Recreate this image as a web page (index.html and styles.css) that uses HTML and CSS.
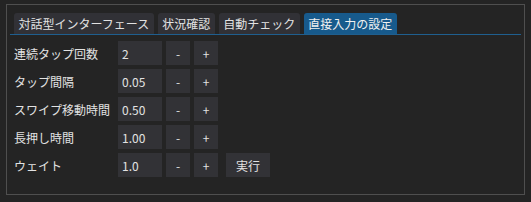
FILE: index.html
```html
<!DOCTYPE html>
<html lang="ja">
<head>
  <meta charset="UTF-8" />
  <title>直接入力の設定</title>
  <link rel="stylesheet" href="styles.css">
</head>
<body>
  <div class="panel">
    <div class="tabs">
      <div class="tab">対話型インターフェース</div>
      <div class="tab">状況確認</div>
      <div class="tab">自動チェック</div>
      <div class="tab active">直接入力の設定</div>
    </div>

    <div class="form">
      <div class="row">
        <span class="label">連続タップ回数</span>
        <input class="field" value="2">
        <button class="btn">-</button>
        <button class="btn">+</button>
      </div>
      <div class="row">
        <span class="label">タップ間隔</span>
        <input class="field" value="0.05">
        <button class="btn">-</button>
        <button class="btn">+</button>
      </div>
      <div class="row">
        <span class="label">スワイプ移動時間</span>
        <input class="field" value="0.50">
        <button class="btn">-</button>
        <button class="btn">+</button>
      </div>
      <div class="row">
        <span class="label">長押し時間</span>
        <input class="field" value="1.00">
        <button class="btn">-</button>
        <button class="btn">+</button>
      </div>
      <div class="row">
        <span class="label">ウェイト</span>
        <input class="field" value="1.0">
        <button class="btn">-</button>
        <button class="btn">+</button>
        <button class="btn run">実行</button>
      </div>
    </div>
  </div>
</body>
</html>
```

FILE: styles.css
```css
* {
  box-sizing: border-box;
  font-family: "Noto Sans CJK JP", "Noto Sans", sans-serif;
}

body {
  margin: 0;
  padding: 4px 6px 7px 6px;
  background: #242424;
  color: #e2e2e2;
  font-size: 12px;
}

.panel {
  height: 191px;
  border: 1px solid #4f4f4f;
  padding: 8px 3px 0 3px;
}

.tabs {
  display: flex;
  gap: 4px;
  padding-left: 4px;
  border-bottom: 1px solid #1f5f8f;
  height: 22px;
}

.tab {
  height: 21px;
  line-height: 21px;
  padding: 0 4.5px;
  background: #313136;
  border-radius: 3px 3px 0 0;
  white-space: nowrap;
}

.tab.active {
  background: #175a8c;
  color: #f0f0f0;
}

.form {
  display: flex;
  flex-direction: column;
  gap: 4px;
  padding: 6px 0 0 4px;
}

.row {
  display: flex;
  align-items: center;
  gap: 4px;
  height: 24px;
}

.label {
  width: 100px;
}

.field {
  width: 44px;
  height: 24px;
  border: none;
  outline: none;
  background: #323236;
  color: #e2e2e2;
  font-size: 12px;
  padding: 0 4px;
}

.btn {
  width: 24px;
  height: 24px;
  border: none;
  padding: 0;
  background: #323236;
  color: #e2e2e2;
  font-size: 12px;
  cursor: pointer;
}

.btn.run {
  width: 44px;
  margin-left: 4px;
}
```
